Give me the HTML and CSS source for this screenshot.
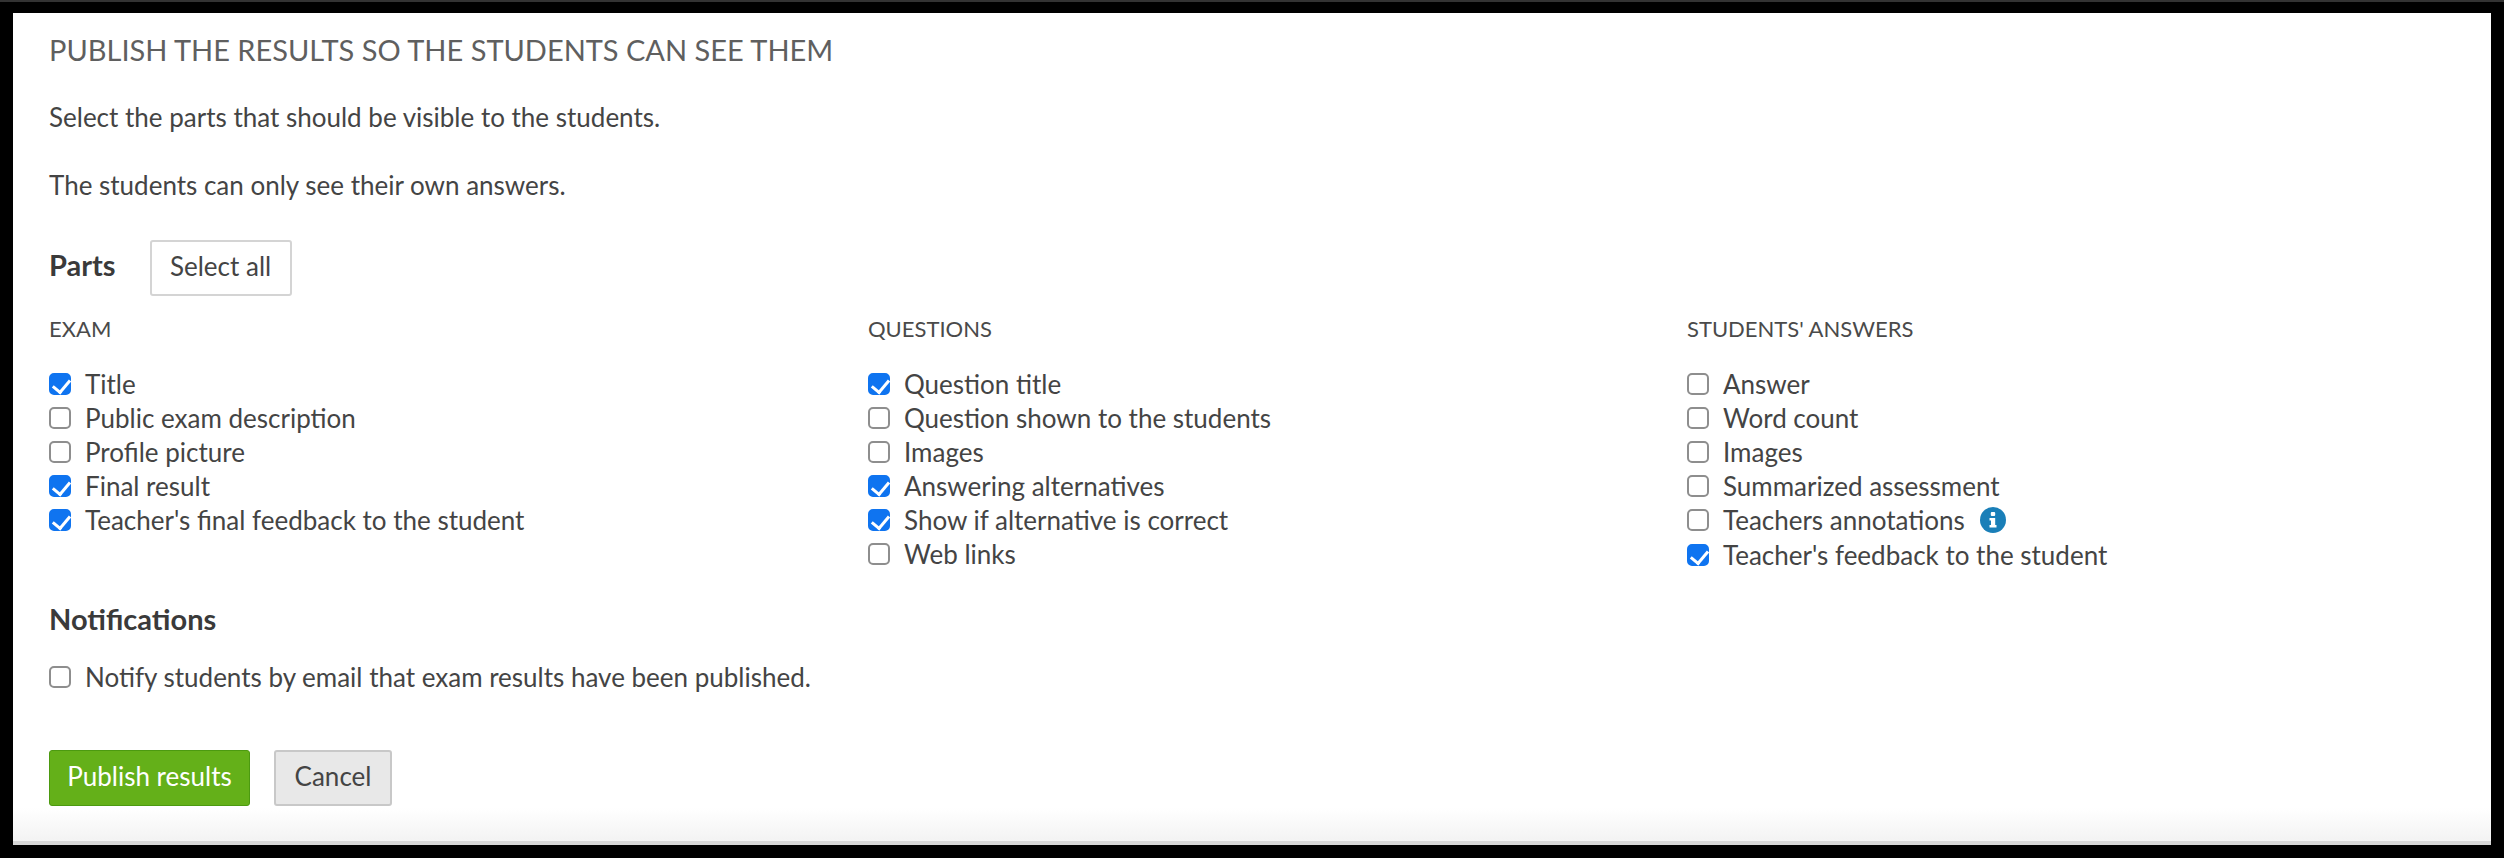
FILE: index.html
```html
<!DOCTYPE html>
<html lang="en">
<head>
<meta charset="utf-8">
<title>Publish the results</title>
<link rel="stylesheet" href="styles.css">
</head>
<body>
<main class="card">
  <h1 class="title">PUBLISH THE RESULTS SO THE STUDENTS CAN SEE THEM</h1>
  <p class="intro">Select the parts that should be visible to the students.</p>
  <p class="intro intro-second">The students can only see their own answers.</p>
  <div class="parts-head">
    <h2 class="section section-parts">Parts</h2>
    <button class="btn btn-select" type="button">Select all</button>
  </div>
  <div class="columns">
    <section>
      <h3 class="col-title">EXAM</h3>
      <label class="row"><input type="checkbox" checked><span>Title</span></label>
      <label class="row"><input type="checkbox"><span>Public exam description</span></label>
      <label class="row"><input type="checkbox"><span>Profile picture</span></label>
      <label class="row"><input type="checkbox" checked><span>Final result</span></label>
      <label class="row"><input type="checkbox" checked><span>Teacher's final feedback to the student</span></label>
    </section>
    <section>
      <h3 class="col-title">QUESTIONS</h3>
      <label class="row"><input type="checkbox" checked><span>Question title</span></label>
      <label class="row"><input type="checkbox"><span>Question shown to the students</span></label>
      <label class="row"><input type="checkbox"><span>Images</span></label>
      <label class="row"><input type="checkbox" checked><span>Answering alternatives</span></label>
      <label class="row"><input type="checkbox" checked><span>Show if alternative is correct</span></label>
      <label class="row"><input type="checkbox"><span>Web links</span></label>
    </section>
    <section>
      <h3 class="col-title">STUDENTS' ANSWERS</h3>
      <label class="row"><input type="checkbox"><span>Answer</span></label>
      <label class="row"><input type="checkbox"><span>Word count</span></label>
      <label class="row"><input type="checkbox"><span>Images</span></label>
      <label class="row"><input type="checkbox"><span>Summarized assessment</span></label>
      <label class="row"><input type="checkbox"><span>Teachers annotations</span>
        <svg class="info" viewBox="0 0 26 26" aria-hidden="true"><circle cx="13" cy="13" r="13" fill="#1a7fb8"/><rect x="10.8" y="5" width="4.4" height="4" rx="1" fill="#fff"/><path d="M9.5 11h5.7v7h1.3v2.6h-7V18h1.5v-4.4H9.5z" fill="#fff"/></svg>
      </label>
      <label class="row row-last"><input type="checkbox" checked><span>Teacher's feedback to the student</span></label>
    </section>
  </div>
  <h2 class="section section-notify">Notifications</h2>
  <label class="row row-notify"><input type="checkbox"><span>Notify students by email that exam results have been published.</span></label>
  <div class="actions">
    <button class="btn btn-primary" type="button">Publish results</button>
    <button class="btn btn-cancel" type="button">Cancel</button>
  </div>
</main>
</body>
</html>
```

FILE: styles.css
```css
* { box-sizing: border-box; }
html, body { margin: 0; height: 858px; overflow: hidden; }
body {
  background: #000;
  border-top: 2px solid #333;
  padding: 11px 13px 13px;
  font-family: Lato, "Noto Sans", sans-serif;
  color: #444;
}
.card {
  height: 832px;
  padding: 19px 36px 0;
  background: linear-gradient(to bottom, #fff 795px, #f3f3f3 828px);
  border-bottom: 4px solid #d8d8d8;
}
.title {
  margin: 0;
  font-size: 29px;
  line-height: 36px;
  font-weight: 400;
  color: #5f5f5f;
}
.intro { margin: 0; padding-top: 31px; font-size: 26px; line-height: 36px; }
.intro-second { padding-top: 32px; }
.parts-head { display: flex; align-items: center; gap: 34px; margin-top: 37px; height: 55px; }
.section { margin: 0; font-size: 29px; line-height: 36px; font-weight: 700; color: #3a3a3a; }
.section-parts { margin-bottom: 5px; }
.btn { font-family: inherit; font-size: 26px; border-radius: 3px; height: 56px; padding: 0 0 3px; }
.btn-select { width: 142px; background: #fff; border: 2px solid #d4d4d4; color: #444; }
.columns { display: grid; grid-template-columns: 819px 819px 1fr; margin-top: 19px; }
.col-title { margin: 0 0 23px; font-size: 22px; line-height: 30px; font-weight: 400; color: #4a4a4a; }
.row { display: flex; align-items: center; height: 34px; font-size: 26px; }
.row-last { height: 36px; }
.row input {
  appearance: none;
  position: relative;
  flex: none;
  width: 22px;
  height: 22px;
  margin: 0 14px 0 0;
  background: #fff;
  border: 2px solid #8e8e8e;
  border-radius: 5px;
}
.row input:checked { background: #0f74f0; border-color: #0f74f0; }
.row input:checked::after {
  content: "";
  position: absolute;
  left: 5px;
  top: 1px;
  width: 8px;
  height: 14px;
  border: solid #fff;
  border-width: 0 3px 3px 0;
  transform: rotate(40deg);
}
.info { width: 26px; height: 26px; margin-left: 15px; }
.section-notify { margin-top: 28px; }
.row-notify { margin-top: 23px; }
.actions { display: flex; gap: 24px; margin-top: 56px; }
.btn-primary { width: 201px; padding-bottom: 5px; background: #64b019; border: 1px solid #4c9a10; color: #fff; }
.btn-cancel { width: 118px; padding-bottom: 5px; background: #e8e8e8; border: 2px solid #c8c8c8; color: #444; }
```
